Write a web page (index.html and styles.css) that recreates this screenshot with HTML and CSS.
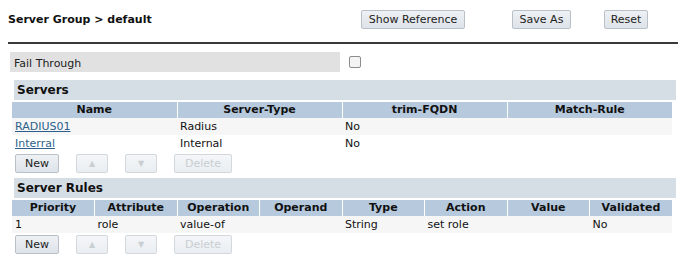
FILE: index.html
```html
<!DOCTYPE html>
<html>
<head>
<meta charset="utf-8">
<link rel="stylesheet" href="styles.css">
</head>
<body>
<div class="page">
  <div class="topbar">
    <div class="title">Server Group &gt; default</div>
    <div class="actions">
      <button class="btn btn-ref">Show Reference</button>
      <button class="btn btn-save">Save As</button>
      <button class="btn btn-reset">Reset</button>
    </div>
  </div>
  <div class="rule"></div>
  <div class="failrow">
    <div class="faillabel">Fail Through</div>
    <span class="check"></span>
  </div>

  <div class="section">Servers</div>
  <table class="grid g4">
    <thead>
      <tr><th>Name</th><th>Server-Type</th><th>trim-FQDN</th><th>Match-Rule</th></tr>
    </thead>
    <tbody>
      <tr class="alt"><td><a href="#">RADIUS01</a></td><td>Radius</td><td>No</td><td></td></tr>
      <tr><td><a href="#">Interral</a></td><td>Internal</td><td>No</td><td></td></tr>
    </tbody>
  </table>
  <div class="btnrow">
    <button class="btn sm new">New</button>
    <button class="btn sm arrow dis">&#9650;</button>
    <button class="btn sm arrow dis">&#9660;</button>
    <button class="btn sm del dis">Delete</button>
  </div>

  <div class="section">Server Rules</div>
  <table class="grid g8">
    <thead>
      <tr><th>Priority</th><th>Attribute</th><th>Operation</th><th>Operand</th><th>Type</th><th>Action</th><th>Value</th><th>Validated</th></tr>
    </thead>
    <tbody>
      <tr class="alt"><td>1</td><td>role</td><td>value-of</td><td></td><td>String</td><td>set role</td><td></td><td>No</td></tr>
    </tbody>
  </table>
  <div class="btnrow">
    <button class="btn sm new">New</button>
    <button class="btn sm arrow dis">&#9650;</button>
    <button class="btn sm arrow dis">&#9660;</button>
    <button class="btn sm del dis">Delete</button>
  </div>
</div>
</body>
</html>
```
FILE: styles.css
```css
html, body { margin: 0; padding: 0; background: #fff; }
body { font-family: "DejaVu Sans", Verdana, sans-serif; font-size: 11px; color: #111; }
.page { padding: 0 2px 0 8px; width: 670px; }
.topbar { display: flex; align-items: center; height: 38px; }
.title { font-weight: bold; font-size: 11px; width: 353px; padding-top: 1px; }
.actions { display: flex; align-items: center; }
.btn {
  font-family: "DejaVu Sans", Verdana, sans-serif; font-size: 11px; color: #222;
  background: linear-gradient(#eef1f4, #dde3e9);
  border: 1px solid #b9c0c8; border-radius: 2px;
  padding: 0; height: 19px; box-sizing: border-box; cursor: default;
}
.btn-ref { width: 104px; }
.btn-save { width: 59px; margin-left: 47px; }
.btn-reset { width: 44px; margin-left: 33px; }
.rule { height: 2px; background: #3a3a3a; margin-top: 4px; width: 670px; }
.failrow { display: flex; align-items: center; margin-top: 8px; margin-left: 2px; }
.faillabel { background: #e1e1e1; width: 326px; height: 20px; line-height: 23px; padding-left: 4px; color: #222; }
.check { width: 10px; height: 10px; border: 1px solid #8c8c8c; border-radius: 2px; margin-left: 9px; background: #f4f4f4; }
.section {
  margin: 8px 2px 0 6px; height: 20px; line-height: 21px;
  background: #d5dde5; font-weight: bold; font-size: 12px; padding-left: 3px; color: #111;
}
.btnrow + .section { margin-top: 5px; }
.grid { border-collapse: collapse; table-layout: fixed; width: 660px; margin: 2px 0 0 4px; }
.grid th {
  background: #b6c9dd; font-weight: bold; height: 16px; padding: 0; line-height: 16px;
  border-left: 1px solid #fff; text-align: center; color: #111;
}
.grid th:first-child { border-left: none; }
.grid td { height: 17px; padding: 0 0 0 3px; line-height: 17px; white-space: nowrap; }
.grid tr.alt td { background: #f6f6f6; }
.grid a { color: #2d5f8a; }
.btnrow { display: flex; align-items: center; margin: 1px 0 0 7px; height: 20px; }
.btn.sm { height: 19px; }
.btn.new { width: 44px; }
.btn.arrow { width: 32px; font-size: 8px; margin-left: 17px; }
.btn.del { width: 58px; margin-left: 17px; }
.btn.dis { color: #c9ced3; background: linear-gradient(#f4f6f8, #eaeef2); border-color: #d3d8dd; }
```
